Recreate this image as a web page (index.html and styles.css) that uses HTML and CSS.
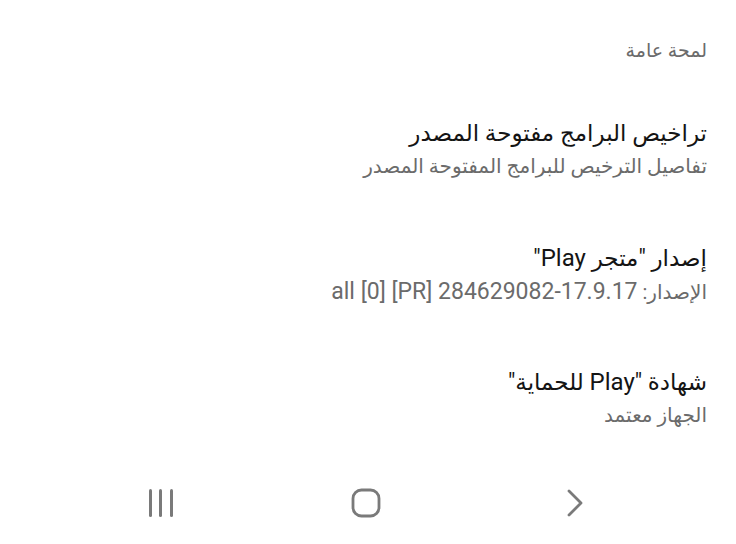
FILE: index.html
```html
<!DOCTYPE html>
<html lang="ar" dir="rtl">
<head>
<meta charset="utf-8">
<link rel="stylesheet" href="styles.css">
</head>
<body>
<div class="screen">
  <div class="content">
    <div class="header">لمحة عامة</div>
    <div class="item item-1">
      <div class="title">تراخيص البرامج مفتوحة المصدر</div>
      <div class="sub">تفاصيل الترخيص للبرامج المفتوحة المصدر</div>
    </div>
    <div class="item item-2">
      <div class="title">إصدار "متجر <span class="latin">Play</span>"</div>
      <div class="sub">الإصدار: <span class="latin" dir="ltr">all [0] [PR] 284629082-17.9.17</span></div>
    </div>
    <div class="item item-3">
      <div class="title">شهادة "<span class="latin">Play</span> للحماية"</div>
      <div class="sub">الجهاز معتمد</div>
    </div>
  </div>
  <div class="navbar" dir="ltr">
    <svg class="nav-recent" width="26" height="30" viewBox="0 0 26 30"><g stroke="#7a7a7a" stroke-width="3" stroke-linecap="round"><line x1="2.5" y1="2.5" x2="2.5" y2="27.5"/><line x1="12.5" y1="2.5" x2="12.5" y2="27.5"/><line x1="23.5" y1="2.5" x2="23.5" y2="27.5"/></g></svg>
    <svg class="nav-home" width="30" height="30" viewBox="0 0 30 30"><rect x="2" y="2" width="26" height="26" rx="8.5" fill="none" stroke="#7a7a7a" stroke-width="2.8"/></svg>
    <svg class="nav-back" width="18" height="30" viewBox="0 0 18 30"><polyline points="3,3 15,15 3,27" fill="none" stroke="#7a7a7a" stroke-width="2.8" stroke-linecap="round" stroke-linejoin="round"/></svg>
  </div>
</div>
</body>
</html>
```
FILE: styles.css
```css
html, body {
  margin: 0;
  padding: 0;
  background: #ffffff;
}
.screen {
  width: 736px;
  height: 544px;
  overflow: hidden;
  font-family: Roboto, "DejaVu Sans", sans-serif;
}
.content {
  padding: 37px 29px 0 29px;
}
.header {
  font-size: 19px;
  color: #6b6b6b;
  line-height: 28px;
}
.item-1 {
  margin-top: 53px;
}
.item-2 {
  margin-top: 59px;
}
.item-3 {
  margin-top: 57px;
}
.title {
  font-size: 23px;
  color: #141414;
  line-height: 32px;
}
.title .latin {
  font-size: 24px;
}
.sub {
  font-size: 20px;
  color: #6b6b6b;
  line-height: 33px;
}
.sub .latin {
  font-size: 23px;
}
.navbar {
  margin-top: 56px;
  height: 30px;
  display: flex;
  align-items: center;
  padding-left: 148px;
}
.nav-recent,
.nav-home,
.nav-back {
  display: block;
  flex: none;
}
.nav-home {
  margin-left: 177px;
}
.nav-back {
  margin-left: 185px;
}
```
